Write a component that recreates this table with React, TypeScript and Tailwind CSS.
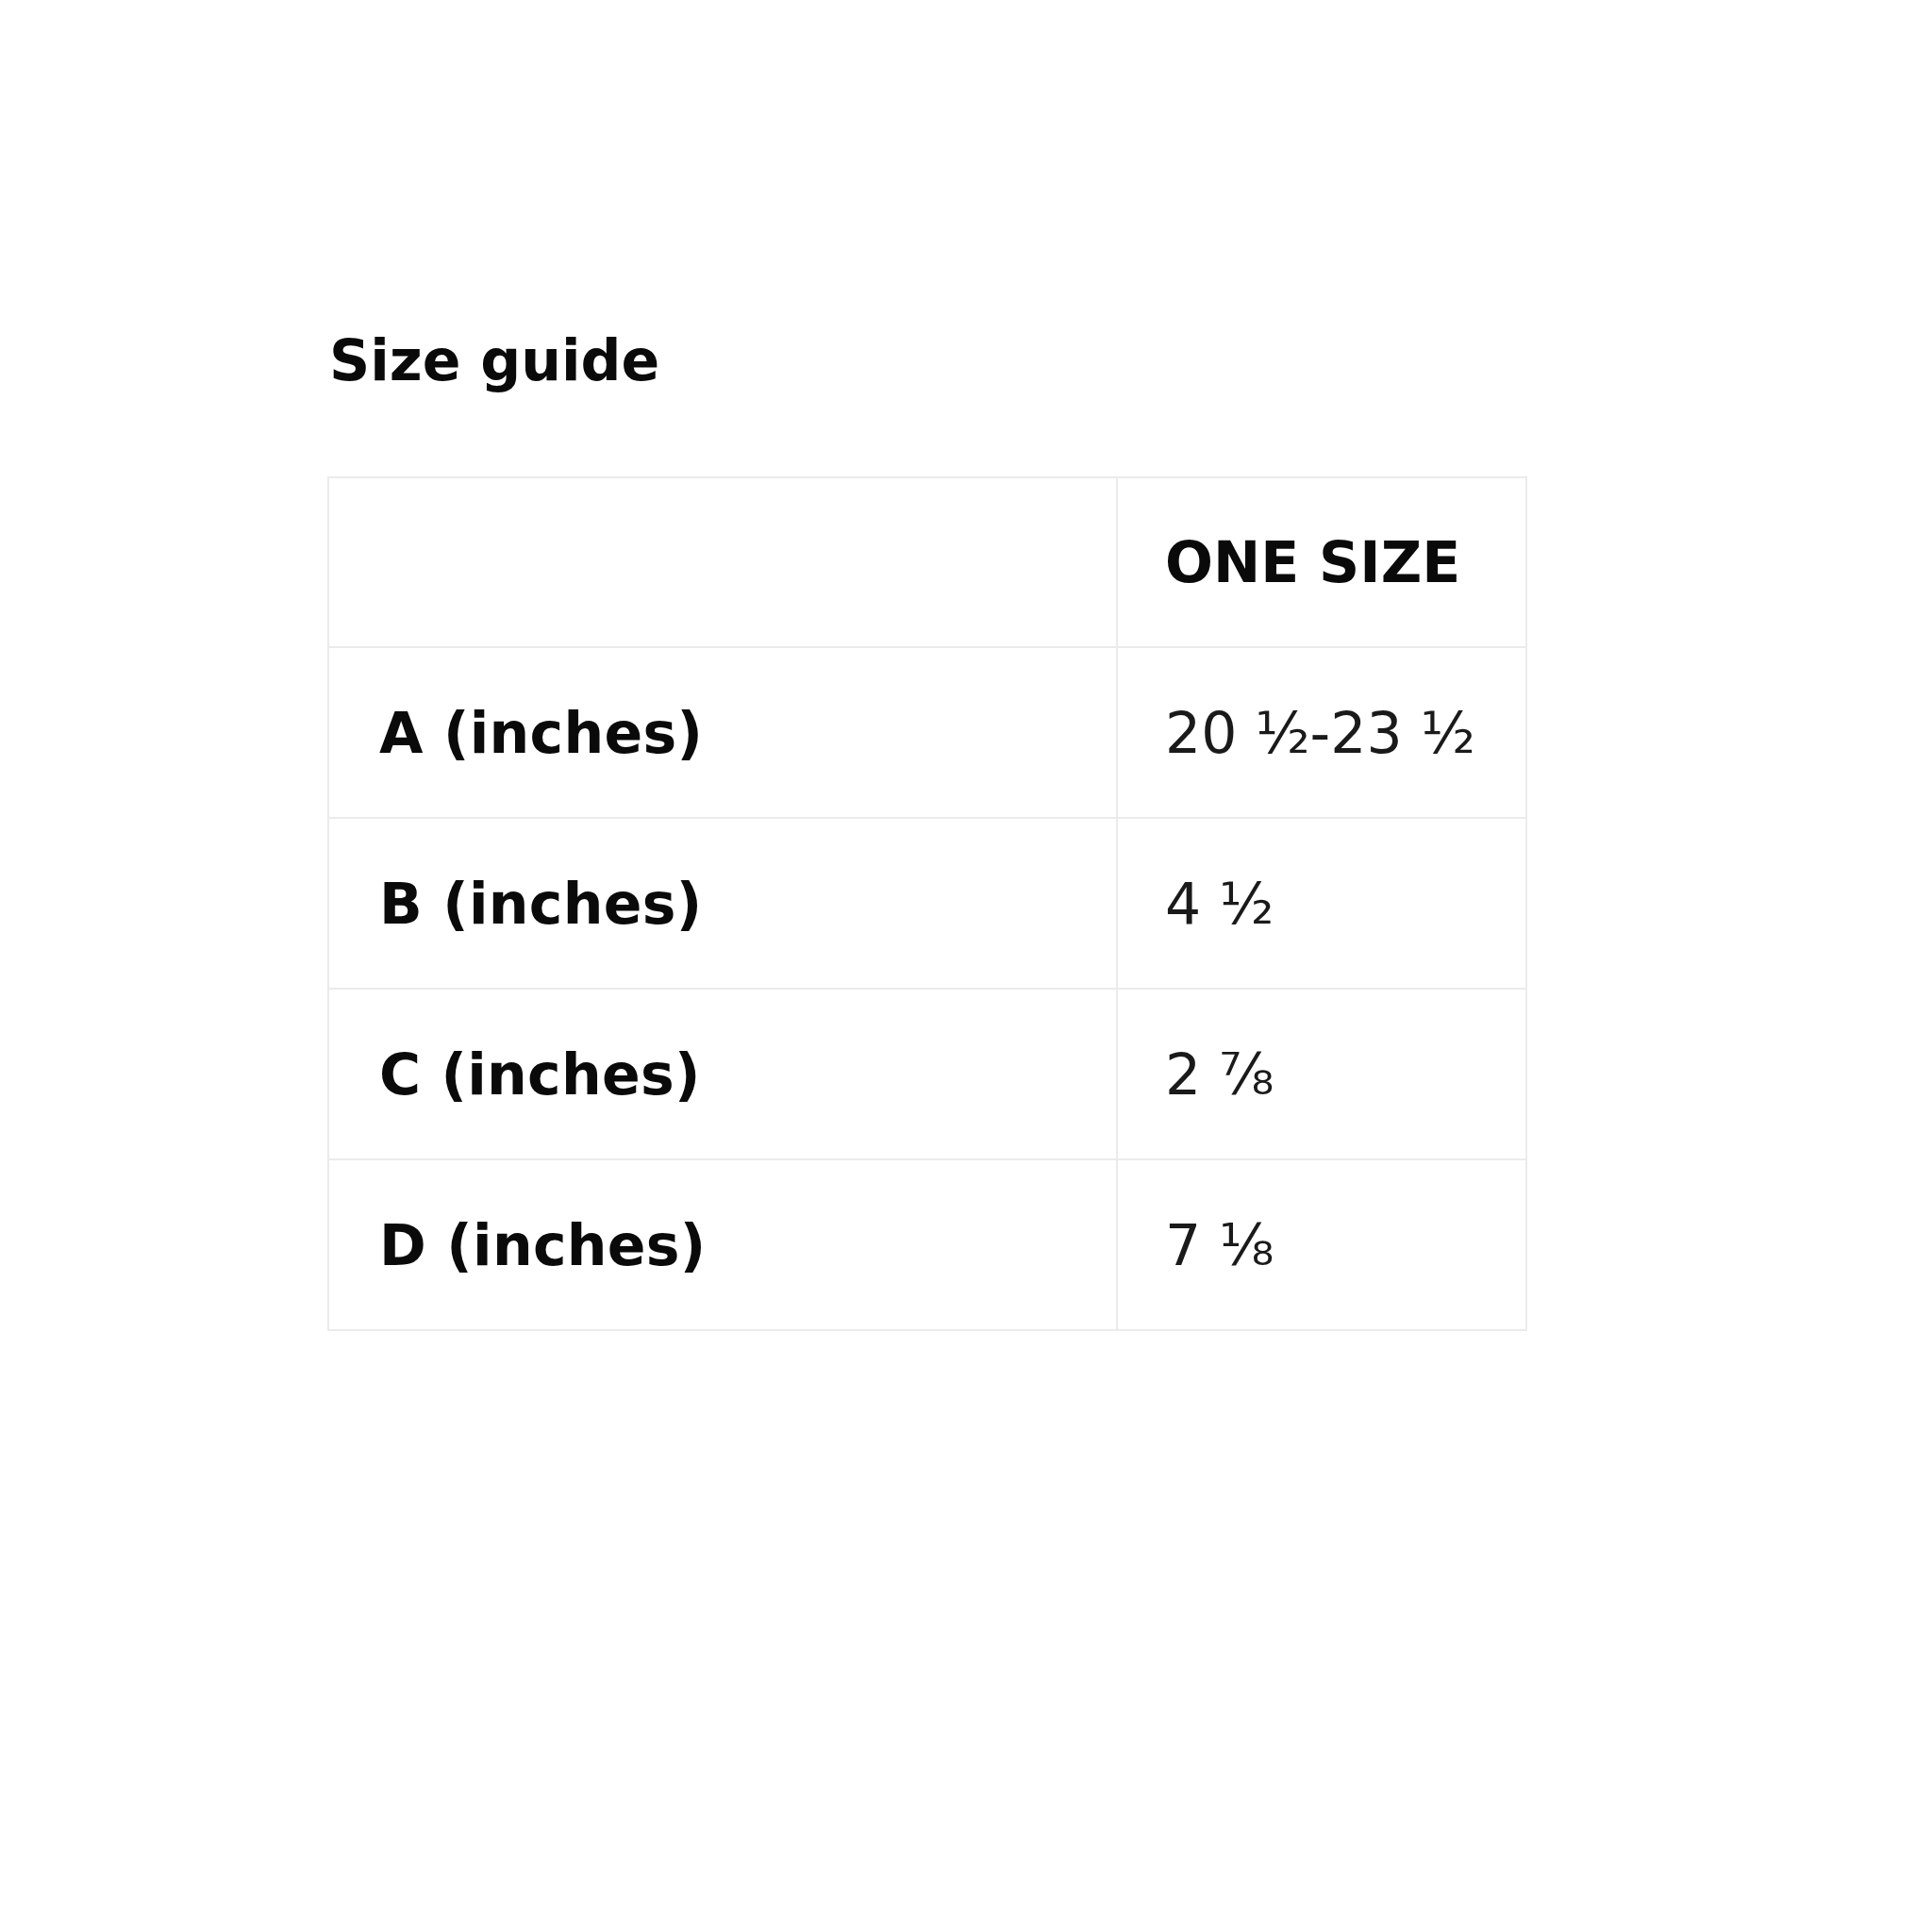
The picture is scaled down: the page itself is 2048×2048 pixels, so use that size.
const rows = [
  { label: "A (inches)", value: "20 ½-23 ½" },
  { label: "B (inches)", value: "4 ½" },
  { label: "C (inches)", value: "2 ⅞" },
  { label: "D (inches)", value: "7 ⅛" },
];

const App = () => {
  return (
    <div className="min-h-screen w-full bg-white pl-[347px] pt-[352px] font-['DejaVu_Sans',sans-serif] text-[#0a0a0a]">
      <h2 className="pl-[2px] text-[60px] font-bold leading-none">Size guide</h2>

      {/* table */}
      <table className="mt-[93px] w-[1270px] table-fixed border-collapse">
        <colgroup>
          <col className="w-[836px]" />
          <col className="w-[434px]" />
        </colgroup>
        <thead>
          <tr className="h-[180px]">
            <th className="border-2 border-[#ebebeb]" />
            <th className="border-2 border-[#ebebeb] pl-[50px] text-left text-[60px] font-bold leading-none">
              ONE SIZE
            </th>
          </tr>
        </thead>
        <tbody>
          {rows.map((row) => (
            <tr key={row.label} className="h-[181px]">
              <td className="border-2 border-[#ebebeb] pl-[53px] text-[60px] font-bold leading-none tracking-[0.3px]">
                {row.label}
              </td>
              <td className="border-2 border-[#ebebeb] pl-[50px] text-[60px] leading-none text-[#1a1a1a]">
                {row.value}
              </td>
            </tr>
          ))}
        </tbody>
      </table>
    </div>
  );
};

export default App;
